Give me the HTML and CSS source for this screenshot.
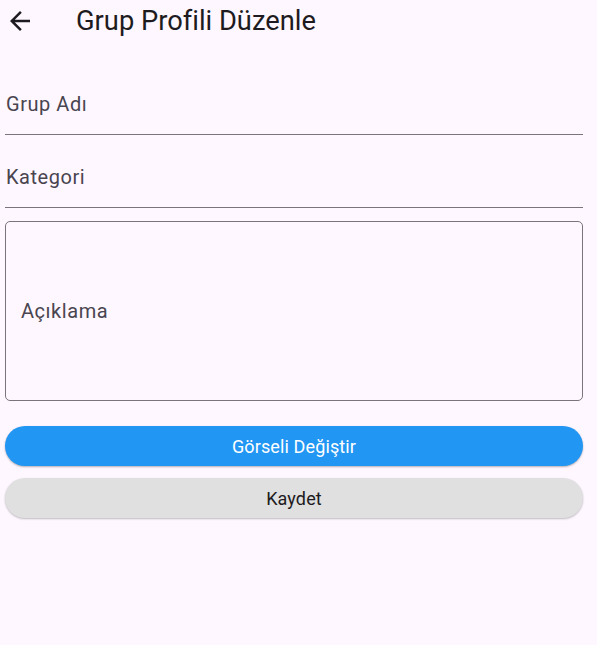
FILE: index.html
```html
<!DOCTYPE html>
<html lang="tr">
<head>
<meta charset="utf-8">
<title>Grup Profili Düzenle</title>
<link rel="stylesheet" href="styles.css">
</head>
<body>
<header class="appbar">
  <button class="back" aria-label="Geri">
    <svg viewBox="0 0 24 24" width="30" height="30"><path d="M20 11H7.83l5.59-5.59L12 4l-8 8 8 8 1.41-1.41L7.83 13H20v-2z" fill="#1D1B20"/></svg>
  </button>
  <h1 class="title">Grup Profili Düzenle</h1>
</header>
<main class="form">
  <div class="field field-first"><span class="label">Grup Adı</span></div>
  <div class="field field-second"><span class="label">Kategori</span></div>
  <div class="area"><span class="label">Açıklama</span></div>
  <button class="btn btn-primary">Görseli Değiştir</button>
  <button class="btn btn-secondary">Kaydet</button>
</main>
</body>
</html>
```

FILE: styles.css
```css
* { box-sizing: border-box; }
html, body {
  margin: 0;
  padding: 0;
  background: #FEF7FF;
  font-family: Roboto, "Noto Sans", sans-serif;
  width: 597px;
  height: 645px;
  overflow: hidden;
}
.appbar {
  display: flex;
  align-items: center;
  height: 42px;
  padding-left: 5px;
}
.back {
  width: 30px;
  height: 30px;
  padding: 0;
  margin: 0;
  border: 0;
  background: none;
  display: flex;
}
.title {
  margin: 0 0 0 41px;
  font-weight: 400;
  font-size: 27.3px;
  line-height: 34px;
  color: #1D1B20;
}
.form {
  display: flex;
  flex-direction: column;
  padding: 0 14px 0 5px;
}
.field {
  height: 57px;
  border-bottom: 1px solid #79747E;
  padding-top: 16px;
  padding-left: 1px;
}
.field-first { margin-top: 36px; }
.field-second { margin-top: 16px; }
.label {
  font-size: 20px;
  line-height: 20px;
  letter-spacing: 0.55px;
  color: #49454F;
}
.area {
  margin-top: 13px;
  height: 180px;
  border: 1px solid #79747E;
  border-radius: 5px;
  display: flex;
  align-items: center;
  padding-left: 15px;
}
.btn {
  height: 40px;
  border: 0;
  border-radius: 20px;
  font-family: Roboto, "Noto Sans", sans-serif;
  font-size: 18px;
  font-weight: 400;
  letter-spacing: 0.12px;
  padding: 0;
}
.btn-primary {
  margin-top: 25px;
  background: #2196F3;
  color: #FFFFFF;
  box-shadow: 0 1px 2px rgba(0,0,0,0.3);
}
.btn-secondary {
  margin-top: 12px;
  background: #E0E0E0;
  color: #1D1B20;
  box-shadow: 0 1px 2px rgba(0,0,0,0.25);
}
```
